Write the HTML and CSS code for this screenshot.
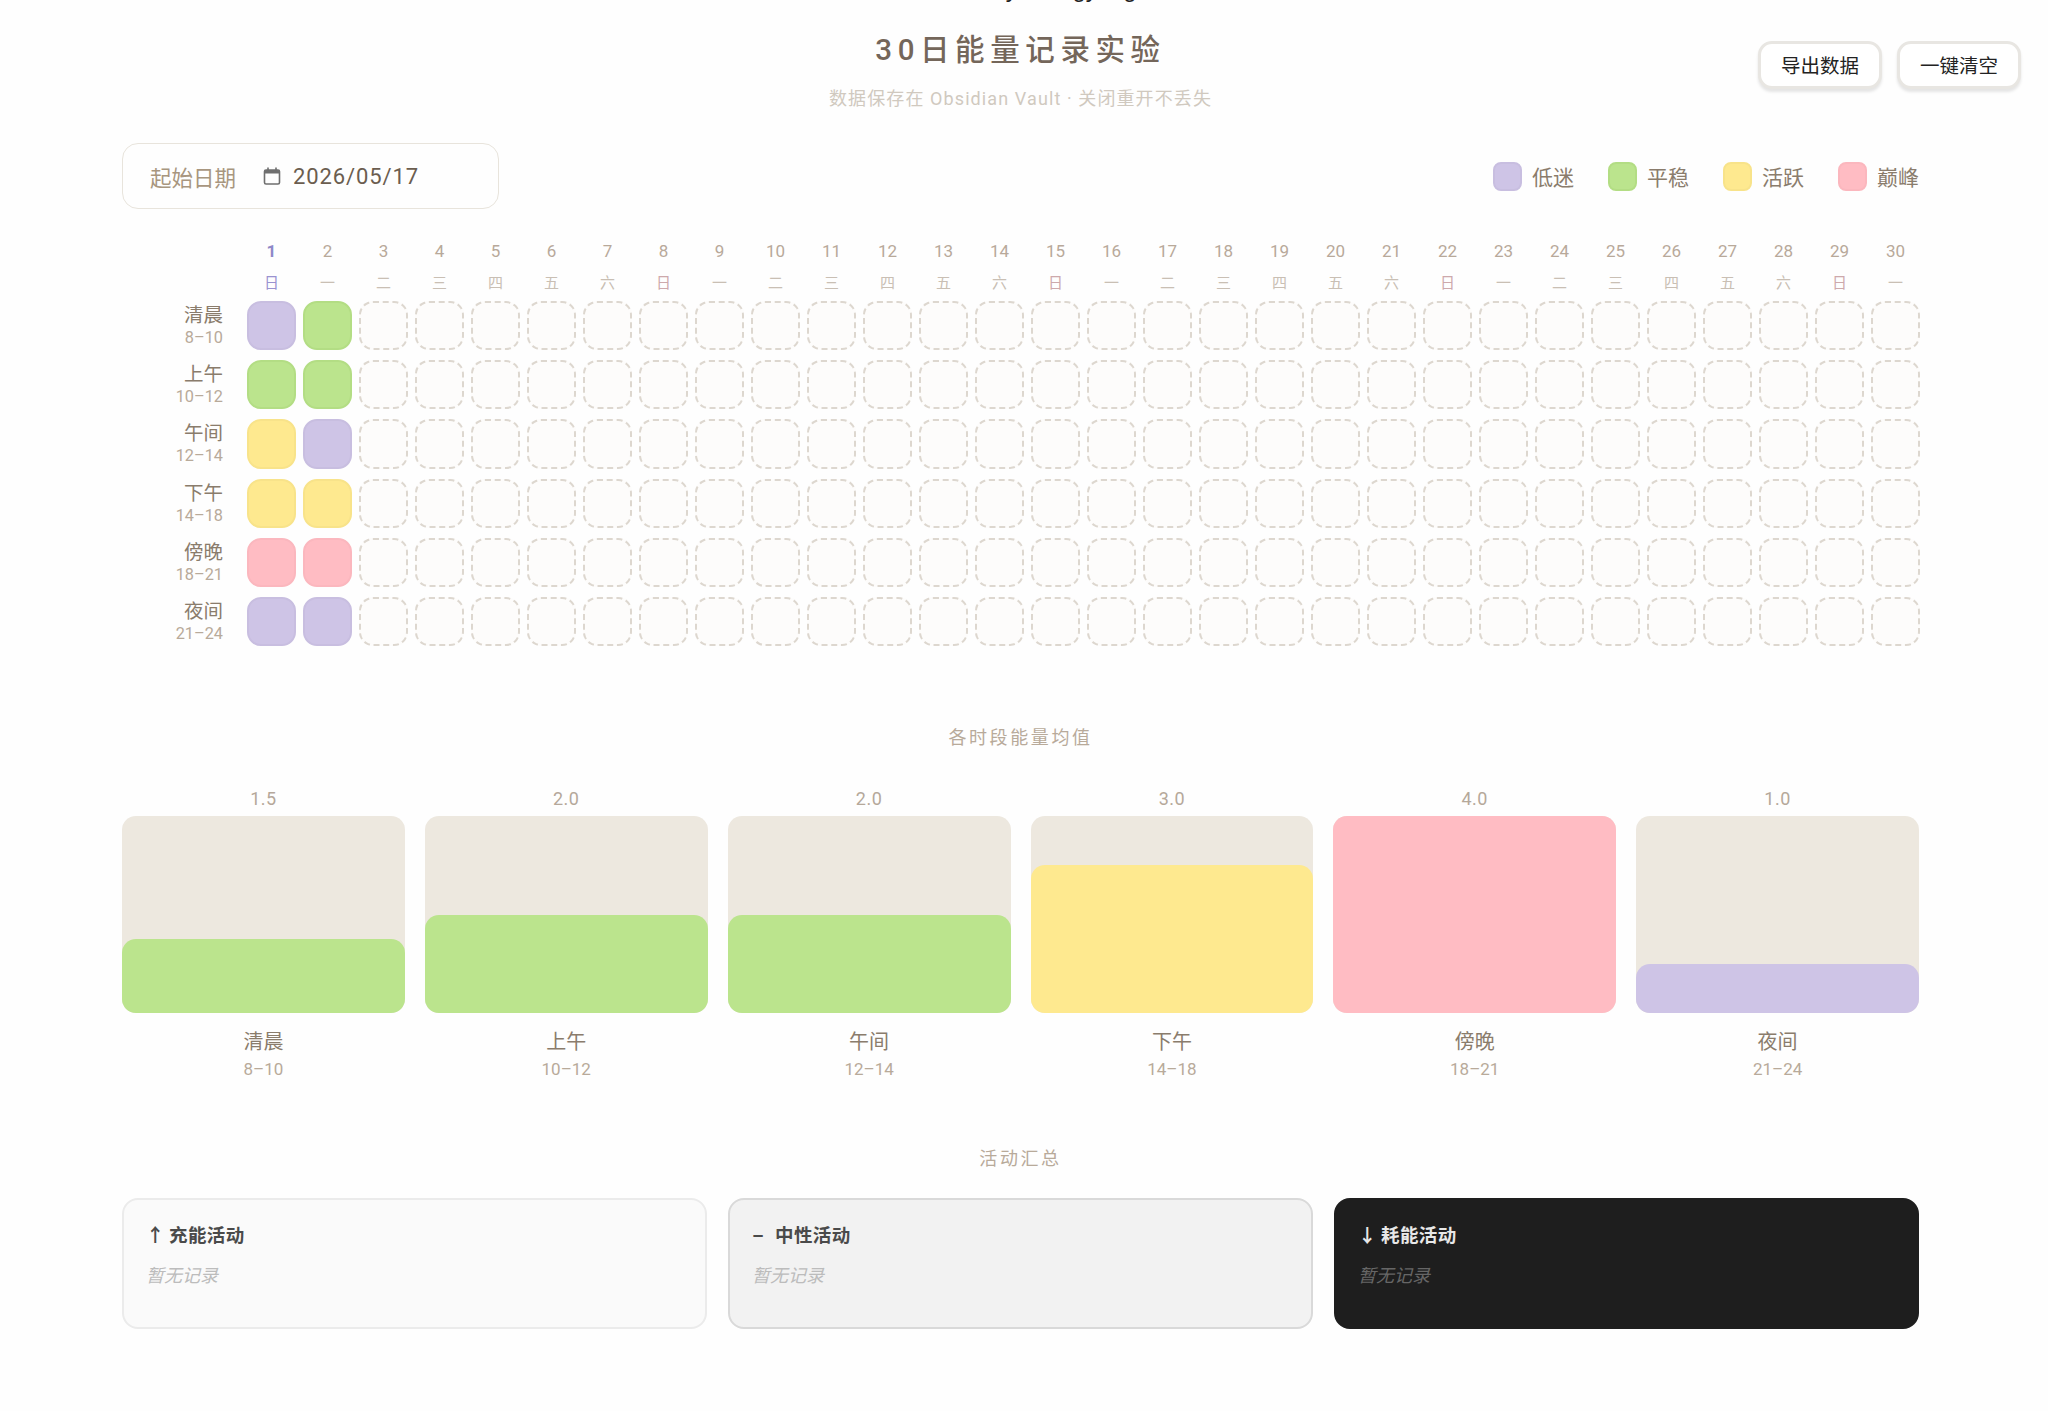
FILE: index.html
```html
<!DOCTYPE html>
<html>
<head>
  <meta charset="UTF-8">
  <link rel="stylesheet" href="styles.css">
</head>
<body>
  <div class="clipped-title"><div class="clipped-text">30-day energy log</div></div>

  <div class="header">
    <div></div>
    <div class="header-center">
      <div class="page-title">30日能量记录实验</div>
      <div class="page-sub">数据保存在 Obsidian Vault · 关闭重开不丢失</div>
    </div>
    <div class="header-actions">
      <button class="tool-btn">导出数据</button>
      <button class="tool-btn">一键清空</button>
    </div>
  </div>

  <div class="controls">
    <div class="date-box">
      <span class="date-label">起始日期</span>
      <svg class="date-icon" width="18" height="18" viewBox="0 0 18 18" fill="none">
        <rect x="1.5" y="3" width="15" height="14" rx="1.5" stroke="#6f6f6f" stroke-width="1.6"/>
        <path d="M1.5 4.5a1.5 1.5 0 0 1 1.5-1.5h12a1.5 1.5 0 0 1 1.5 1.5V6.5h-15z" fill="#6f6f6f"/>
        <path d="M5 0.5v3M13 0.5v3" stroke="#6f6f6f" stroke-width="1.6"/>
      </svg>
      <span class="date-value">2026/05/17</span>
    </div>
    <div class="legend">
      <div class="legend-item"><span class="swatch lv1"></span>低迷</div>
      <div class="legend-item"><span class="swatch lv2"></span>平稳</div>
      <div class="legend-item"><span class="swatch lv3"></span>活跃</div>
      <div class="legend-item"><span class="swatch lv4"></span>巅峰</div>
    </div>
  </div>

  <!-- grid is filled by grid.js -->
  <div class="grid-wrap">
    <div class="day-head" id="dayHead"></div>
    <div class="rows" id="rows"></div>
  </div>

  <div class="section-title avg-title">各时段能量均值</div>
  <div class="bars">
    <div class="bar-col">
      <div class="bar-value">1.5</div>
      <div class="bar-track"><div class="bar-fill lv2" style="height:37.5%"></div></div>
      <div class="bar-name">清晨</div>
      <div class="bar-time">8–10</div>
    </div>
    <div class="bar-col">
      <div class="bar-value">2.0</div>
      <div class="bar-track"><div class="bar-fill lv2" style="height:50%"></div></div>
      <div class="bar-name">上午</div>
      <div class="bar-time">10–12</div>
    </div>
    <div class="bar-col">
      <div class="bar-value">2.0</div>
      <div class="bar-track"><div class="bar-fill lv2" style="height:50%"></div></div>
      <div class="bar-name">午间</div>
      <div class="bar-time">12–14</div>
    </div>
    <div class="bar-col">
      <div class="bar-value">3.0</div>
      <div class="bar-track"><div class="bar-fill lv3" style="height:75%"></div></div>
      <div class="bar-name">下午</div>
      <div class="bar-time">14–18</div>
    </div>
    <div class="bar-col">
      <div class="bar-value">4.0</div>
      <div class="bar-track"><div class="bar-fill lv4" style="height:100%"></div></div>
      <div class="bar-name">傍晚</div>
      <div class="bar-time">18–21</div>
    </div>
    <div class="bar-col">
      <div class="bar-value">1.0</div>
      <div class="bar-track"><div class="bar-fill lv1" style="height:25%"></div></div>
      <div class="bar-name">夜间</div>
      <div class="bar-time">21–24</div>
    </div>
  </div>

  <div class="section-title act-title">活动汇总</div>
  <div class="cards">
    <div class="card card-light">
      <div class="card-head"><span class="card-arrow">↑</span>充能活动</div>
      <div class="card-empty">暂无记录</div>
    </div>
    <div class="card card-mid">
      <div class="card-head"><span class="card-arrow">–</span>中性活动</div>
      <div class="card-empty">暂无记录</div>
    </div>
    <div class="card card-dark">
      <div class="card-head"><span class="card-arrow">↓</span>耗能活动</div>
      <div class="card-empty">暂无记录</div>
    </div>
  </div>

  <script src="grid.js"></script>
</body>
</html>
```

FILE: styles.css
```css
* {
  box-sizing: border-box;
}
body {
  margin: 0;
  padding: 0 129px 0 122px;
  background: #fefefe;
  color: #8a7c6c;
  font-family: Roboto, "Noto Sans CJK SC", sans-serif;
  overflow: hidden;
}
.clipped-title {
  height: 2px;
  padding-left: 40px;
  overflow: hidden;
  text-align: center;
  font-family: "Liberation Sans", sans-serif;
  font-size: 24px;
  line-height: 24px;
  color: #222;
}
.clipped-text {
  margin-top: -23px;
}

.header {
  display: grid;
  grid-template-columns: 1fr auto 1fr;
  height: 141px;
}
.header-center {
  padding-top: 29px;
  text-align: center;
}
.page-title {
  font-size: 29.5px;
  line-height: 38px;
  font-weight: 500;
  letter-spacing: 5.6px;
  color: #74665a;
}
.page-sub {
  margin-top: 18px;
  font-size: 18px;
  line-height: 24px;
  letter-spacing: 1.1px;
  color: #d0c9bf;
}
.header-actions {
  display: flex;
  justify-content: flex-end;
  align-items: flex-start;
  gap: 15px;
  margin-right: -102px;
  padding-top: 39px;
}
.tool-btn {
  width: 124px;
  height: 48px;
  padding: 0 0 2px;
  border: 3px solid #e8e6e2;
  border-radius: 14px;
  background: #fff;
  box-shadow: 0 3px 3px rgba(0, 0, 0, 0.1);
  font-family: inherit;
  font-size: 19.5px;
  color: #222;
}

.controls {
  display: flex;
  justify-content: space-between;
  align-items: center;
  height: 66px;
}
.date-box {
  display: flex;
  align-items: center;
  width: 377px;
  height: 66px;
  padding-left: 27px;
  border: 1.5px solid #e8e4dc;
  border-radius: 16px;
  background: #fefefe;
}
.date-label {
  width: 113px;
  font-size: 21.5px;
  color: #a8967f;
}
.date-icon {
  margin-right: 12px;
}
.date-value {
  font-size: 22px;
  letter-spacing: 0.9px;
  color: #6b5d4f;
}
.legend {
  display: flex;
  gap: 34px;
}
.legend-item {
  display: flex;
  align-items: center;
  gap: 10px;
  font-size: 21px;
  color: #8a7c6c;
}
.swatch {
  width: 29px;
  height: 29px;
  border-radius: 8px;
  border: 2px solid transparent;
}

.lv1 { background: #cec4e6; }
.lv2 { background: #bbe48d; }
.lv3 { background: #fee98f; }
.lv4 { background: #ffbcc3; }
.swatch.lv1, .cell.lv1 { border-color: #c8bee0; }
.swatch.lv2, .cell.lv2 { border-color: #b3dd84; }
.swatch.lv3, .cell.lv3 { border-color: #f8e38a; }
.swatch.lv4, .cell.lv4 { border-color: #fbb7be; }

.grid-wrap {
  margin-top: 30px;
}
.day-head {
  display: grid;
  grid-template-columns: repeat(30, 49px);
  gap: 7px;
  margin-left: 125px;
  height: 62px;
}
.day-col {
  text-align: center;
}
.day-num {
  font-size: 17px;
  line-height: 24px;
  color: #b8a99a;
}
.day-week {
  margin-top: 8px;
  font-size: 15px;
  line-height: 24px;
  color: #c9bfb4;
}
.day-col.sunday .day-week {
  color: #cda9ac;
}
.day-col.today .day-num {
  font-weight: 700;
  color: #8f88c8;
}
.day-col.today .day-week {
  color: #9a92d0;
}
.rows {
  display: flex;
  flex-direction: column;
  gap: 10px;
}
.row {
  display: flex;
  height: 49.2px;
}
.row-label {
  flex: none;
  width: 101px;
  margin-right: 24px;
  padding-top: 3px;
  text-align: right;
}
.row-name {
  font-size: 19.5px;
  line-height: 24px;
  color: #8a7c6c;
}
.row-time {
  font-size: 16.3px;
  line-height: 20px;
  color: #b8aa9a;
}
.row-cells {
  display: grid;
  grid-template-columns: repeat(30, 49px);
  gap: 7px;
}
.cell {
  border: 2px solid transparent;
  border-radius: 14px;
}
.cell.empty {
  border: 2.5px dashed #ddd7cf;
  background: #fdfcfb;
}

.section-title {
  text-align: center;
  font-size: 18px;
  line-height: 24px;
  letter-spacing: 2.6px;
  color: #b8aa9a;
}
.avg-title {
  margin-top: 80px;
}
.bars {
  display: grid;
  grid-template-columns: repeat(6, 1fr);
  gap: 20px;
  margin-top: 37px;
}
.bar-col {
  text-align: center;
}
.bar-value {
  font-size: 18px;
  line-height: 24px;
  letter-spacing: 0.5px;
  color: #b5a89a;
}
.bar-track {
  display: flex;
  align-items: flex-end;
  height: 197px;
  margin-top: 5px;
  border-radius: 14px;
  background: #ede8df;
}
.bar-fill {
  width: 100%;
  border-radius: 14px;
}
.bar-name {
  margin-top: 15px;
  font-size: 20px;
  line-height: 28px;
  color: #8a7c6c;
}
.bar-time {
  margin-top: 1px;
  font-size: 17px;
  line-height: 24px;
  color: #b8aa9a;
}

.act-title {
  margin-top: 66px;
}
.cards {
  display: grid;
  grid-template-columns: repeat(3, 1fr);
  gap: 21px;
  margin-top: 27px;
}
.card {
  height: 131px;
  padding: 23px 24px 0 22px;
  border: 2px solid transparent;
  border-radius: 16px;
}
.card-light {
  background: #fafafa;
  border-color: #ebebeb;
}
.card-mid {
  background: #f2f2f2;
  border-color: #d9d9d9;
}
.card-dark {
  background: #1e1e1e;
  border-color: #1e1e1e;
}
.card-head {
  display: flex;
  align-items: center;
  font-size: 18.5px;
  line-height: 26px;
  font-weight: 700;
  letter-spacing: 0.4px;
  color: #4a4a4a;
}
.card-arrow {
  width: 23px;
}
.card-dark .card-head {
  color: #e8e8e8;
}
.card-empty {
  margin-top: 14px;
  font-size: 18px;
  line-height: 26px;
  font-style: italic;
  color: #bcbcbc;
}
.card-dark .card-empty {
  color: #666;
}
```

FILE: grid.js
```js
var weekNames = ['日', '一', '二', '三', '四', '五', '六'];
var slots = [
  ['清晨', '8–10', ['lv1', 'lv2']],
  ['上午', '10–12', ['lv2', 'lv2']],
  ['午间', '12–14', ['lv3', 'lv1']],
  ['下午', '14–18', ['lv3', 'lv3']],
  ['傍晚', '18–21', ['lv4', 'lv4']],
  ['夜间', '21–24', ['lv1', 'lv1']]
];

var head = document.getElementById('dayHead');
for (var d = 0; d < 30; d++) {
  var col = document.createElement('div');
  col.className = 'day-col' + (d % 7 === 0 ? ' sunday' : '') + (d === 0 ? ' today' : '');
  col.innerHTML = '<div class="day-num">' + (d + 1) + '</div><div class="day-week">' + weekNames[d % 7] + '</div>';
  head.appendChild(col);
}

var rows = document.getElementById('rows');
slots.forEach(function (slot) {
  var html = '<div class="row-label"><div class="row-name">' + slot[0] + '</div><div class="row-time">' + slot[1] + '</div></div><div class="row-cells">';
  for (var i = 0; i < 30; i++) {
    html += '<div class="cell ' + (slot[2][i] || 'empty') + '"></div>';
  }
  var row = document.createElement('div');
  row.className = 'row';
  row.innerHTML = html + '</div>';
  rows.appendChild(row);
});
```
